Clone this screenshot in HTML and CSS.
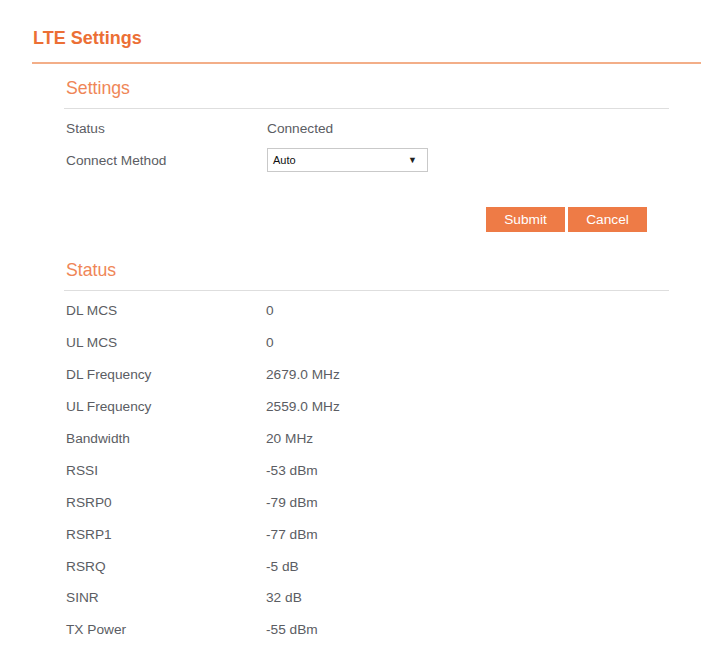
FILE: index.html
```html
<!DOCTYPE html>
<html>
<head>
<meta charset="utf-8">
<link rel="stylesheet" href="styles.css">
</head>
<body>
<div class="page">
  <div class="header">
    <h1 class="title">LTE Settings</h1>
  </div>
  <div class="section">
    <h2 class="sec-title">Settings</h2>
    <div class="rows">
      <div class="row"><span class="label">Status</span><span class="value">Connected</span></div>
      <div class="row"><span class="label">Connect Method</span>
        <span class="value">
          <span class="select"><span class="sel-text">Auto</span><span class="sel-arrow">▼</span></span>
        </span>
      </div>
    </div>
    <div class="actions">
      <button class="btn">Submit</button>
      <button class="btn">Cancel</button>
    </div>
  </div>
  <div class="section status">
    <h2 class="sec-title">Status</h2>
    <div class="rows">
      <div class="row"><span class="label">DL MCS</span><span class="value">0</span></div>
      <div class="row"><span class="label">UL MCS</span><span class="value">0</span></div>
      <div class="row"><span class="label">DL Frequency</span><span class="value">2679.0 MHz</span></div>
      <div class="row"><span class="label">UL Frequency</span><span class="value">2559.0 MHz</span></div>
      <div class="row"><span class="label">Bandwidth</span><span class="value">20 MHz</span></div>
      <div class="row"><span class="label">RSSI</span><span class="value">-53 dBm</span></div>
      <div class="row"><span class="label">RSRP0</span><span class="value">-79 dBm</span></div>
      <div class="row"><span class="label">RSRP1</span><span class="value">-77 dBm</span></div>
      <div class="row"><span class="label">RSRQ</span><span class="value">-5 dB</span></div>
      <div class="row"><span class="label">SINR</span><span class="value">32 dB</span></div>
      <div class="row"><span class="label">TX Power</span><span class="value">-55 dBm</span></div>
    </div>
  </div>
</div>
</body>
</html>
```

FILE: styles.css
```css
* { box-sizing: border-box; }
html, body { margin: 0; padding: 0; background: #fff; }
body {
  font-family: "Liberation Sans", Arial, sans-serif;
  color: #5b5d63;
}
.page {
  width: 716px;
  height: 645px;
  overflow: hidden;
}
.header {
  margin-left: 32px;
  width: 669px;
  height: 64px;
  border-bottom: 2px solid #f3ae88;
  padding: 28px 0 0 1px;
}
.title {
  margin: 0;
  font-size: 18px;
  line-height: 20px;
  font-weight: bold;
  color: #ec6f35;
}
.section {
  margin-left: 64px;
  width: 605px;
}
.sec-title {
  margin: 0;
  padding: 14px 0 10px 2px;
  font-size: 17.7px;
  line-height: 20px;
  font-weight: normal;
  color: #ef8657;
  border-bottom: 1px solid #dedede;
}
.rows {
  padding-top: 3px;
}
.status .rows {
  padding-top: 4px;
}
.row {
  display: flex;
  align-items: center;
  height: 32px;
  font-size: 13.7px;
}
.status .row {
  height: 31.9px;
}
.label {
  width: 203px;
  padding-left: 2px;
}
.status .label { width: 202px; }
.value { display: flex; align-items: center; }
.select {
  display: flex;
  align-items: center;
  justify-content: space-between;
  width: 161px;
  height: 24px;
  border: 1px solid #c9c9c9;
  padding: 0 10px 0 5px;
  color: #111;
  font-size: 11px;
  background: #fff;
}
.sel-arrow {
  font-size: 9px;
  color: #222;
}
.actions {
  display: flex;
  justify-content: flex-end;
  gap: 3px;
  padding: 31px 22px 14px 0;
}
.btn {
  width: 79px;
  height: 25px;
  border: 0;
  margin: 0;
  background: #ee7b46;
  color: #fff;
  font-family: "Liberation Sans", Arial, sans-serif;
  font-size: 13.7px;
  padding: 0;
  cursor: pointer;
}
```
